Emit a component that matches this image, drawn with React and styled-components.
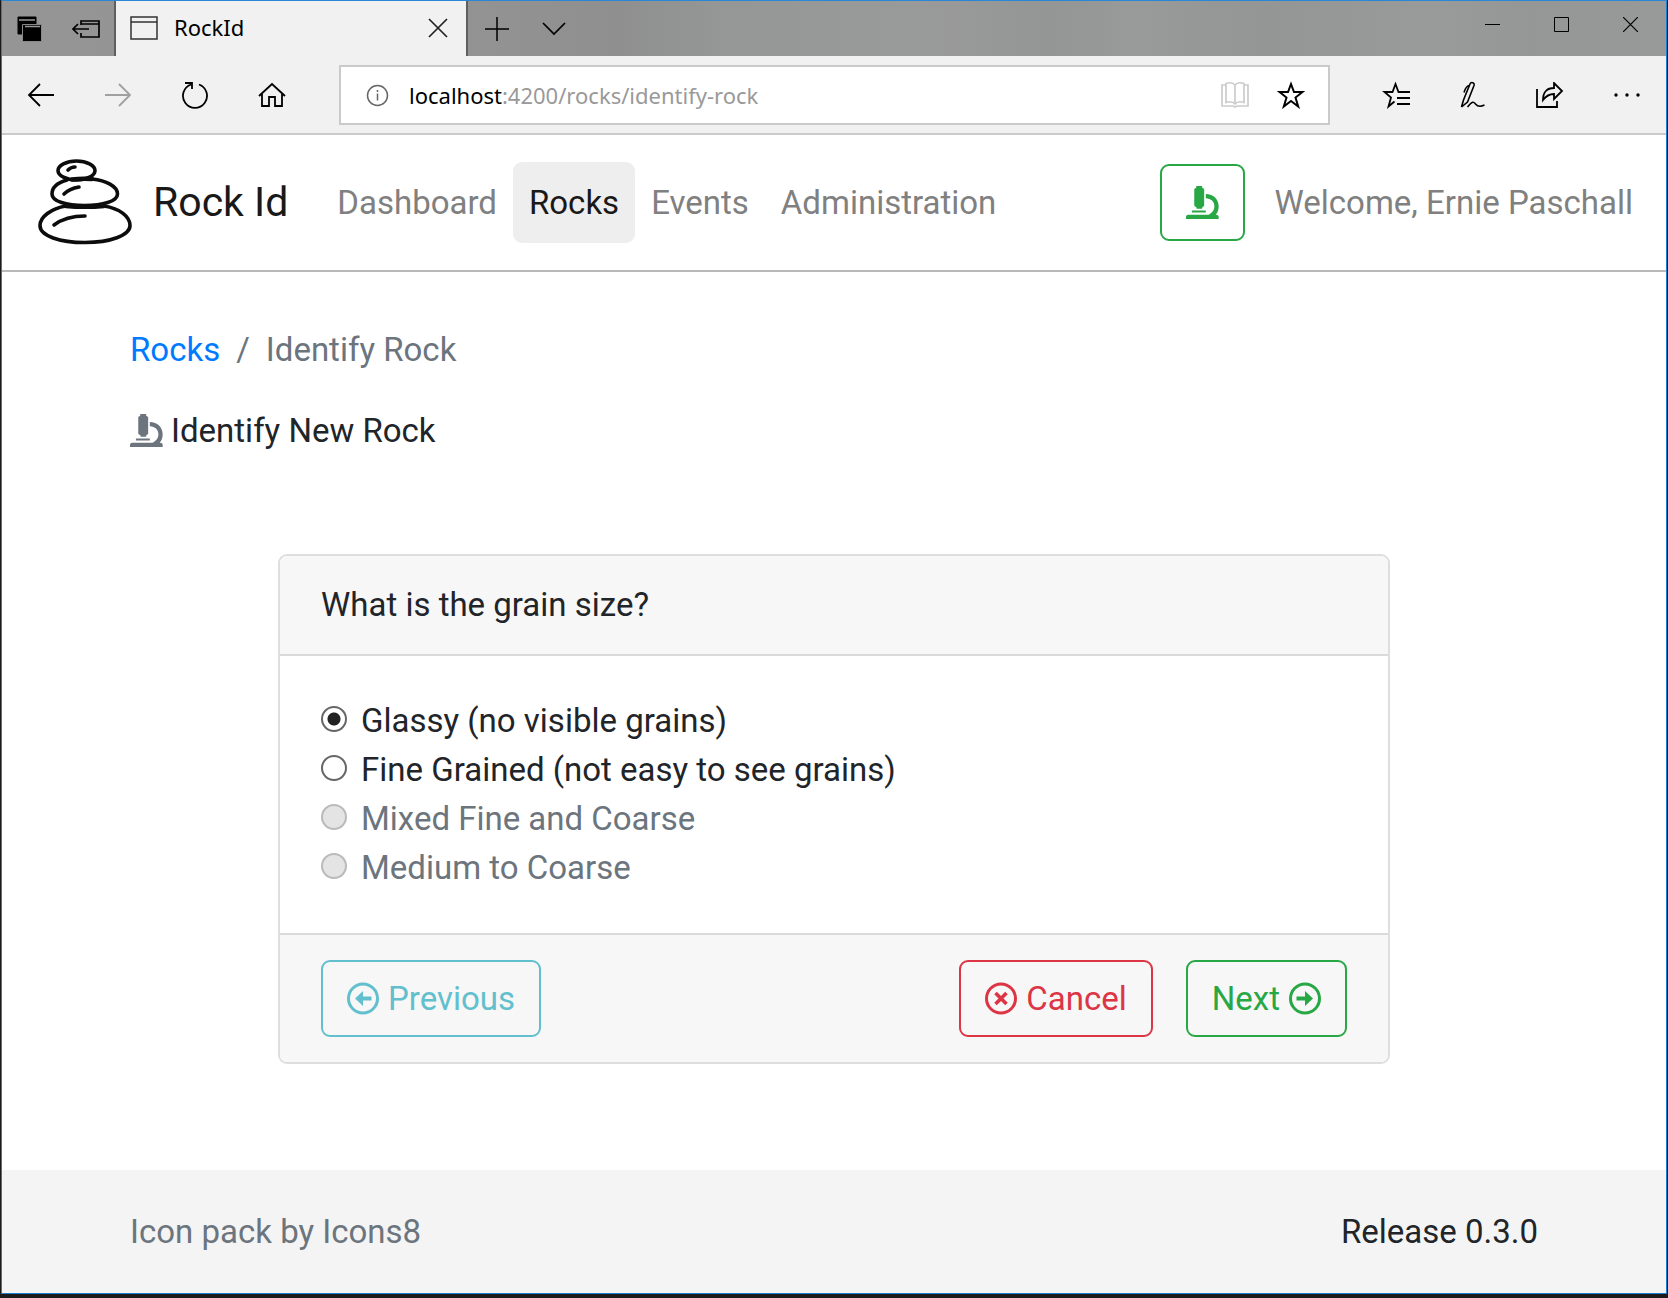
import React, { useState } from "react";
import styled, { createGlobalStyle } from "styled-components";

const GlobalStyle = createGlobalStyle`
  *, *::before, *::after { box-sizing: border-box; }
  body {
    margin: 0;
    background: #1b1b1b;
    color: #212529;
    font-family: Roboto, sans-serif;
    font-size: 33px;
    line-height: 49px;
  }
  button, input { font: inherit; }
`;

/* ---------- window frame ---------- */

const Desktop = styled.div`
  display: flex;
  min-height: 100vh;
  padding: 0 1px 4px;
`;

const Window = styled.div`
  display: flex;
  flex: 1;
  flex-direction: column;
  min-width: 0;
  border: 1px solid #1a7fd0;
  border-top-color: #2a87d8;
  background: #fff;
`;

const TitleBar = styled.div`
  display: flex;
  height: 55px;
  background: linear-gradient(90deg, #959595 0%, #939393 28%, #8f8f8f 37%, #949796 43%, #989a99 52%, #999 57%, #939695 63%, #999a9a 68%, #939695 76%, #999b9a 86%, #959696 92%, #989a99 100%);
`;

const ChromeButton = styled.button`
  display: flex;
  align-items: center;
  justify-content: center;
  width: ${(p) => p.$width}px;
  padding: 0;
  border: 0;
  background: none;
  color: ${(p) => (p.disabled ? "#a0a0a0" : "#000")};
`;

const TabTools = styled.div`
  display: flex;
`;

const Tab = styled.div`
  display: flex;
  align-items: center;
  width: 354px;
  padding: 0 6px 2px 14px;
  border: solid #5f5f5f;
  border-width: 0 2px;
  background: #f1f1f1;
  color: #000;
  font-family: "Noto Sans", "Open Sans", sans-serif;
  font-size: 22px;
  line-height: 32px;
`;

const TabTitle = styled.span`
  flex: 1;
  padding: 0 0 2px 16px;
`;

const WindowControls = styled.div`
  display: flex;
  height: 46px;
  margin-left: auto;
  padding-right: 1px;
`;

const Toolbar = styled.div`
  display: flex;
  height: 79px;
  padding-right: 1px;
  border-bottom: 2px solid #cacaca;
  background: #f1f1f1;
`;

const AddressBar = styled.div`
  display: flex;
  flex: 1;
  align-items: center;
  min-width: 0;
  height: 60px;
  margin: 9px 27px 0 29px;
  padding: 0 9px 0 25px;
  border: 2px solid #cacaca;
  background: #fff;
  font-family: "Noto Sans", "Open Sans", sans-serif;
  font-size: 22px;
  line-height: 32px;
`;

const Host = styled.label`
  padding-left: 20px;
  color: #000;
`;

const Address = styled.input`
  flex: 1;
  min-width: 0;
  height: 32px;
  padding: 0;
  border: 0;
  outline: 0;
  background: none;
  color: #999;
`;

/* ---------- site header ---------- */

const Navbar = styled.nav`
  display: flex;
  align-items: center;
  height: 137px;
  padding: 0 17px 0 31px;
  border-bottom: 2px solid #b9b9b9;
`;

const Brand = styled.a`
  display: flex;
  align-items: center;
  gap: 16px;
  margin-right: 33px;
  color: #191919;
  font-size: 41px;
  text-decoration: none;
`;

const NavLinks = styled.div`
  display: flex;
  flex: 1;
`;

const NavLink = styled.a`
  padding: 16px;
  border-radius: 9px;
  background: ${(p) => (p.$active ? "#eee" : "none")};
  color: ${(p) => (p.$active ? "#191919" : "#808080")};
  text-decoration: none;
`;

const tones = { info: "#62bfcd", danger: "#dc3545", success: "#28a745" };

const Button = styled.button`
  display: flex;
  align-items: center;
  gap: 9px;
  height: 77px;
  padding: 0 24px;
  border: 2px solid ${(p) => tones[p.$tone]};
  border-radius: 9px;
  background: none;
  color: ${(p) => tones[p.$tone]};
`;

const Account = styled.div`
  display: flex;
  align-items: center;
  gap: 14px;
`;

/* ---------- page ---------- */

const Container = styled.div`
  width: 100%;
  max-width: 1470px;
  margin: 0 auto;
  padding: 0 31px;
`;

const Page = styled(Container).attrs({ as: "main" })`
  flex: 1;
  padding-top: 53px;
  padding-bottom: 106px;
`;

const Breadcrumb = styled.ol`
  display: flex;
  gap: 16px;
  margin: 0 0 32px;
  padding: 0;
  color: #6c757d;
  list-style: none;
`;

const Crumb = styled.li`
  display: flex;
  gap: 16px;

  & + &::before { content: "/"; }
`;

const Link = styled.a`
  color: #007bff;
  text-decoration: none;
`;

const Title = styled.h1`
  display: flex;
  align-items: center;
  gap: 8px;
  margin: 0 0 99px;
  font-size: 33px;
  font-weight: 400;

  svg { color: #6c757d; }
`;

const Card = styled.form`
  max-width: 1112px;
  margin: 0 auto;
  border: 2px solid #dedede;
  border-radius: 9px;
`;

const CardHeader = styled.header`
  padding: 24px 41px 25px;
  border-bottom: 2px solid #dadada;
  border-radius: 7px 7px 0 0;
  background: #f7f7f7;
`;

const CardBody = styled.div`
  padding: 40px 41px 41px;
`;

const CardFooter = styled.footer`
  display: flex;
  gap: 33px;
  padding: 25px 41px;
  border-top: 2px solid #dadada;
  border-radius: 0 0 7px 7px;
  background: #f7f7f7;
`;

const Spacer = styled.div`
  flex: 1;
`;

const Option = styled.div`
  display: flex;
  align-items: center;
  gap: 14px;
  color: ${(p) => (p.$muted ? "#6c757d" : "inherit")};
`;

const Radio = styled.input`
  width: 26px;
  height: 26px;
  margin: 0 0 4px;
  appearance: none;
  border: 2px solid #666;
  border-radius: 50%;
  background: #fff;

  &:checked { background: radial-gradient(circle, #222 6px, #fff 7px); }
  &:disabled { border-color: #bababa; background: #e4e4e4; }
`;

const SiteFooter = styled.footer`
  padding: 37px 0;
  background: #f4f4f4;
`;

const FooterRow = styled(Container)`
  display: flex;
  justify-content: space-between;
`;

const Credit = styled.span`
  color: #6c757d;
`;

/* ---------- icons ---------- */

const Icon = ({ w = 28, h = 28, sw = 2, children }) => (
  <svg width={w} height={h} viewBox={`0 0 ${w} ${h}`} fill="none" stroke="currentColor" strokeWidth={sw} aria-hidden="true">
    {children}
  </svg>
);

const TabStackIcon = () => (
  <Icon w={26} h={26} sw={1}>
    <path d="M1 1h18v17H1z" fill="currentColor" />
    <path d="M2 4h16" stroke="#999" strokeWidth="1.500" />
    <path d="M5.500 8.500h19v17h-19z" fill="currentColor" stroke="#888" />
    <path d="M8 10.500h15" stroke="#999" strokeWidth="1.500" />
  </Icon>
);
const SetAsideIcon = () => (
  <Icon w={28} h={20}>
    <path d="M9 6V2h18v16H9v-4M9 5h18M1 10h16M6 5l-5 5 5 5" strokeWidth="1.700" />
  </Icon>
);
const PageIcon = () => (
  <Icon w={28} h={24}>
    <path d="M1 1h26v22H1zM1 6h26" stroke="#333" strokeWidth="1.500" />
  </Icon>
);
const CloseIcon = () => <Icon w={20} h={20}><path d="M1 1l18 18M19 1L1 19" stroke="#222" strokeWidth="1.700" /></Icon>;
const PlusIcon = () => <Icon w={24} h={24} sw={1.5}><path d="M12 0v24M0 12h24" /></Icon>;
const ChevronIcon = () => <Icon w={24} h={14} sw={1.7}><path d="M1 1l11 11L23 1" /></Icon>;
const MinimizeIcon = () => <Icon w={15} h={15} sw={1}><path d="M0 7.500h15" /></Icon>;
const MaximizeIcon = () => <Icon w={15} h={15} sw={1}><path d="M.5.5h14v14H.5z" /></Icon>;
const QuitIcon = () => <Icon w={15} h={15} sw={1.2}><path d="M0 0l15 15M15 0L0 15" /></Icon>;
const BackIcon = () => <Icon w={28} h={24} sw={1.8}><path d="M27 12H2M13 1L2 12l11 11" /></Icon>;
const ForwardIcon = () => <Icon w={28} h={24} sw={1.8}><path d="M1 12h25M15 1l11 11-11 11" /></Icon>;
const RefreshIcon = () => (
  <Icon w={28} h={28} sw={1.8}>
    <path d="M18 3.500a12 12 0 1 1-8 0M4 2h7v6" />
  </Icon>
);
const HomeIcon = () => (
  <Icon w={28} h={26} sw={1.8}>
    <path d="M1 14L14 2l13 12M4 12v12h7v-9h6v9h7V12" />
  </Icon>
);
const InfoIcon = () => (
  <Icon w={23} h={23}>
    <circle cx="11.500" cy="11.500" r="10" stroke="#666" strokeWidth="1.500" />
    <path d="M11.500 9.500v7M11.500 6v2" stroke="#666" strokeWidth="1.500" />
  </Icon>
);
const BookIcon = () => (
  <Icon w={28} h={28}>
    <path
      d="M14 4v19M14 4C12 1.500 8 1.500 5 2.500v19c3-1 7-1 9 1.500 2-2.500 6-2.500 9-1.500v-19C20 1.500 16 1.500 14 4M5 4H1v21h11l2 1 2-1h11V4h-4"
      stroke="#ccc"
      strokeWidth="1.700"
    />
  </Icon>
);
const StarIcon = () => (
  <Icon w={28} h={28}>
    <path d="M14 3l3 8h8.500l-7 5.500 2.700 9L14 20l-7.200 5.500 2.700-9-7-5.500H11z" />
  </Icon>
);
const HubIcon = () => (
  <Icon w={28} h={28} sw={1.8}>
    <path d="M28 11H16.500L13.500 3l-3 8H2.500l6.500 5.500-2.500 9 6-5M15 17h13M15 23h13" />
  </Icon>
);
const NotesIcon = () => (
  <Icon w={26} h={28} sw={1.6}>
    <path d="M1.500 26l2-7L10 3c1-2.500 5-1.500 4 1.500L7.500 21l-6 5M9.500 4.500c-2 0-4 2-5.500 7M7.500 26c5-6 6-5.500 8-3s5 3 9 1" />
  </Icon>
);
const ShareIcon = () => (
  <Icon w={28} h={26} sw={1.8}>
    <path d="M1 7v18h20v-6M7 18c0-8 4-12 11-12V1l8 8-8 8v-5c-5 0-8 2-11 6z" />
  </Icon>
);
const MoreIcon = () => (
  <Icon w={26} h={4}>
    <g fill="currentColor" stroke="none">
      <circle cx="2" cy="2" r="1.700" /><circle cx="13" cy="2" r="1.700" /><circle cx="24" cy="2" r="1.700" />
    </g>
  </Icon>
);

const RocksLogo = () => (
  <svg width="104" height="92" viewBox="34 157 104 92" fill="none" stroke="#0c0c0c" strokeWidth="3.600" strokeLinecap="round" aria-hidden="true">
    <ellipse cx="77.500" cy="170.500" rx="18.500" ry="9.500" />
    <path d="M93 179c14 1.500 25.500 7 25.500 15 0 7.500-15 11.500-33 11.500S53 201.500 53 194c0-6.500 6-11.500 15-14" />
    <path d="M67 206c-15 2.500-26 11-26 19.500C41 236 61 242.500 86 242.500s45-7 45-17c0-9-10-17-26-19.500" />
    <path d="M73 179.500c7-1 14-1 20-.500M67 206c11 1 27 1 38 0" strokeWidth="4.500" />
    <path d="M69 170c2-2 4-3 7-3M65 194c4-4 9-6 15-7M55 225c8-6 18-9 31-9" />
  </svg>
);

const MicroscopeIcon = () => (
  <svg width="33" height="33" viewBox="0 0 100 100" fill="currentColor" aria-hidden="true">
    <path d="M31 0h18v5l6 4v51l-6 5v4H32v-4l-7-5V9l6-4z" />
    <path d="M18 74h42v6H18zM0 100V94q0-7 7-7h61c13-6 18-16 18-26 0-13-10-24-26-24V24c23 0 39 16 39 37 0 10-3 19-9 26q9 0 9 7v6z" />
  </svg>
);

const CircleIcon = ({ children }) => (
  <svg width="32" height="33" viewBox="0 0 32 33" fill="none" stroke="currentColor" strokeWidth="3" aria-hidden="true">
    <circle cx="16" cy="16.500" r="14.500" />
    {children}
  </svg>
);
const PreviousIcon = () => (
  <CircleIcon>
    <path d="M15 16.500h9.500" strokeWidth="4" />
    <path d="M8 16.500L16 9v15z" fill="currentColor" stroke="none" />
  </CircleIcon>
);
const NextIcon = () => (
  <CircleIcon>
    <path d="M7.500 16.500h9.500" strokeWidth="4" />
    <path d="M24 16.500L16 9v15z" fill="currentColor" stroke="none" />
  </CircleIcon>
);
const CancelIcon = () => (
  <CircleIcon>
    <path d="M10.500 11l11 11M21.500 11l-11 11" strokeWidth="3.600" />
  </CircleIcon>
);

/* ---------- app ---------- */

const links = ["Dashboard", "Rocks", "Events", "Administration"];

const grainSizes = [
  { id: "glassy", label: "Glassy (no visible grains)" },
  { id: "fine", label: "Fine Grained (not easy to see grains)" },
  { id: "mixed", label: "Mixed Fine and Coarse", disabled: true },
  { id: "medium", label: "Medium to Coarse", disabled: true },
];

function BrowserChrome() {
  return (
    <>
      <TitleBar>
        <TabTools>
          <ChromeButton $width={56} aria-label="Tabs you've set aside"><TabStackIcon /></ChromeButton>
          <ChromeButton $width={56} aria-label="Set these tabs aside"><SetAsideIcon /></ChromeButton>
        </TabTools>
        <Tab>
          <PageIcon />
          <TabTitle>RockId</TabTitle>
          <ChromeButton $width={44} aria-label="Close tab"><CloseIcon /></ChromeButton>
        </Tab>
        <ChromeButton $width={58} aria-label="New tab"><PlusIcon /></ChromeButton>
        <ChromeButton $width={56} aria-label="Show tab previews"><ChevronIcon /></ChromeButton>
        <WindowControls>
          <ChromeButton $width={69} aria-label="Minimize"><MinimizeIcon /></ChromeButton>
          <ChromeButton $width={69} aria-label="Maximize"><MaximizeIcon /></ChromeButton>
          <ChromeButton $width={69} aria-label="Close window"><QuitIcon /></ChromeButton>
        </WindowControls>
      </TitleBar>
      <Toolbar>
        <ChromeButton $width={77} aria-label="Back"><BackIcon /></ChromeButton>
        <ChromeButton $width={77} aria-label="Forward" disabled><ForwardIcon /></ChromeButton>
        <ChromeButton $width={77} aria-label="Refresh"><RefreshIcon /></ChromeButton>
        <ChromeButton $width={77} aria-label="Home"><HomeIcon /></ChromeButton>
        <AddressBar>
          <InfoIcon />
          <Host htmlFor="address">localhost</Host>
          <Address id="address" defaultValue=":4200/rocks/identify-rock" spellCheck={false} />
          <ChromeButton $width={56} aria-label="Reading view"><BookIcon /></ChromeButton>
          <ChromeButton $width={56} aria-label="Add to favorites"><StarIcon /></ChromeButton>
        </AddressBar>
        <ChromeButton $width={77} aria-label="Hub"><HubIcon /></ChromeButton>
        <ChromeButton $width={77} aria-label="Add notes"><NotesIcon /></ChromeButton>
        <ChromeButton $width={77} aria-label="Share"><ShareIcon /></ChromeButton>
        <ChromeButton $width={77} aria-label="More"><MoreIcon /></ChromeButton>
      </Toolbar>
    </>
  );
}

export default function App() {
  const [grain, setGrain] = useState("glassy");
  return (
    <Desktop>
      <GlobalStyle />
      <Window>
        <BrowserChrome />
        <Navbar>
          <Brand href="#"><RocksLogo />Rock Id</Brand>
          <NavLinks>
            {links.map((name) => (
              <NavLink key={name} href="#" $active={name === "Rocks"}>{name}</NavLink>
            ))}
          </NavLinks>
          <Account>
            <Button $tone="success" aria-label="Identify rock"><MicroscopeIcon /></Button>
            <NavLink href="#">Welcome, Ernie Paschall</NavLink>
          </Account>
        </Navbar>
        <Page>
          <Breadcrumb>
            <Crumb><Link href="#">Rocks</Link></Crumb>
            <Crumb>Identify Rock</Crumb>
          </Breadcrumb>
          <Title><MicroscopeIcon />Identify New Rock</Title>
          <Card onSubmit={(e) => e.preventDefault()}>
            <CardHeader>What is the grain size?</CardHeader>
            <CardBody>
              {grainSizes.map(({ id, label, disabled }) => (
                <Option key={id} $muted={disabled}>
                  <Radio
                    type="radio"
                    name="grain"
                    id={id}
                    disabled={disabled}
                    checked={grain === id}
                    onChange={() => setGrain(id)}
                  />
                  <label htmlFor={id}>{label}</label>
                </Option>
              ))}
            </CardBody>
            <CardFooter>
              <Button type="button" $tone="info"><PreviousIcon />Previous</Button>
              <Spacer />
              <Button type="button" $tone="danger"><CancelIcon />Cancel</Button>
              <Button type="submit" $tone="success">Next<NextIcon /></Button>
            </CardFooter>
          </Card>
        </Page>
        <SiteFooter>
          <FooterRow>
            <Credit>Icon pack by Icons8</Credit>
            <span>Release 0.3.0</span>
          </FooterRow>
        </SiteFooter>
      </Window>
    </Desktop>
  );
}
